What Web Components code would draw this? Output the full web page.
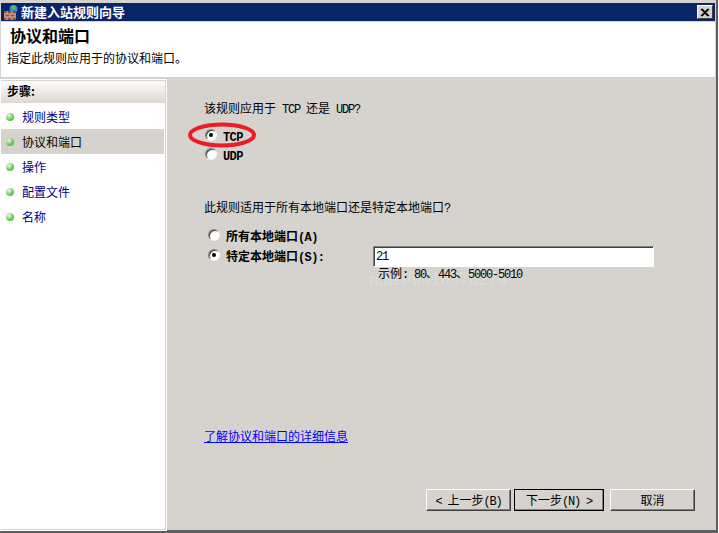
<!DOCTYPE html>
<html lang="zh">
<head>
<meta charset="utf-8">
<title>新建入站规则向导</title>
<style>
  html, body { margin: 0; padding: 0; width: 719px; height: 533px; overflow: hidden; background: #fff; }
  body { font: 12px "Noto Sans CJK SC", "Liberation Sans", sans-serif; color: #000; }
</style>
</head>
<body>

<wizard-window>
  <span slot="title">新建入站规则向导</span>
  <wizard-header></wizard-header>
  <div style="display:flex;flex:1;min-height:0;background:#d6d3ce;gap:2px">
    <step-list>
      <step-item>规则类型</step-item>
      <step-item active>协议和端口</step-item>
      <step-item>操作</step-item>
      <step-item>配置文件</step-item>
      <step-item>名称</step-item>
    </step-list>
    <protocol-page></protocol-page>
  </div>
</wizard-window>

<script>
class WizardWindow extends HTMLElement {
  constructor() {
    super();
    this.attachShadow({ mode: 'open' });
    this.shadowRoot.innerHTML = `
      <style>
        :host {
          display: flex;
          flex-direction: column;
          width: 718px;
          height: 533px;
          box-sizing: border-box;
          background: #d6d3ce;
          border-right: 2px solid #5f5f5f;
          border-bottom: 3px solid #5f5f5f;
          padding: 3px 0 0 1px;
        }
        .bar {
          height: 18px;
          flex: none;
          margin-right: 1px;
          background: #0a246a;
          color: #fff;
          font-weight: 700;
          font-size: 13px;
          display: flex;
          align-items: center;
          padding-left: 3px;
          gap: 3px;
          line-height: 18px;
        }
        .bar svg { flex: none; }
        .title { flex: 1; }
        .close {
          width: 16px;
          height: 14px;
          margin-right: 2px;
          background: #d6d3ce;
          box-sizing: border-box;
          border: 1px solid;
          border-color: #fff #404040 #404040 #fff;
          display: flex;
          align-items: center;
          justify-content: center;
        }
        .body { flex: 1; min-height: 0; display: flex; flex-direction: column; margin-right: 1px; padding-top: 1px; }
      </style>
      <div class="bar">
        <svg width="14" height="15" viewBox="0 0 14 15">
          <circle cx="9.500" cy="4" r="4" fill="#2f8fd0"/>
          <path d="M7 2l3-2 2 3-3 2z" fill="#5fc04f"/>
          <rect x="0" y="6" width="12" height="9" fill="#9a4a36"/>
          <path d="M0 9h12M0 12h12M3 6v3M8 6v3M1 9v3M6 9v3M11 9v3M3 12v3M8 12v3" stroke="#d9b8a8" stroke-width="1" fill="none"/>
        </svg>
        <span class="title"><slot name="title"></slot></span>
        <span class="close">
          <svg width="10" height="9" viewBox="0 0 10 9"><path d="M1 1l7 7M2 1l7 7M8 1l-7 7M9 1l-7 7" stroke="#000" stroke-width="1.200" fill="none"/></svg>
        </span>
      </div>
      <div class="body"><slot></slot></div>
    `;
  }
}

class WizardHeader extends HTMLElement {
  constructor() {
    super();
    this.attachShadow({ mode: 'open' });
    this.shadowRoot.innerHTML = `
      <style>
        :host {
          display: block;
          flex: none;
          height: 56px;
          box-sizing: border-box;
          background: #fff;
          border-bottom: 1px solid #d6d3ce;
          padding: 3px 0 0 9px;
        }
        h1 { margin: 0; font-size: 16px; line-height: 20px; font-weight: 700; }
        p { margin: 4px 0 0 -3px; font-size: 12px; line-height: 17px; }
      </style>
      <h1>协议和端口</h1>
      <p>指定此规则应用于的协议和端口。</p>
    `;
  }
}

class StepList extends HTMLElement {
  constructor() {
    super();
    this.attachShadow({ mode: 'open' });
    this.shadowRoot.innerHTML = `
      <style>
        :host {
          display: block;
          flex: none;
          width: 165px;
          box-sizing: border-box;
          margin-top: 2px;
          background: #fff;
          border: 1px solid #d6d3ce;
          border-left: 0;
          outline: 1px solid #fff;
        }
        .head {
          height: 22px;
          padding-left: 6px;
          font-weight: 700;
          line-height: 20px;
          background: linear-gradient(#fdfcfc, #dcd7d2);
        }
        .items { display: flex; flex-direction: column; padding-top: 1px; }
      </style>
      <div class="head">步骤:</div>
      <div class="items"><slot></slot></div>
    `;
  }
}

class StepItem extends HTMLElement {
  constructor() {
    super();
    this.attachShadow({ mode: 'open' });
    this.shadowRoot.innerHTML = `
      <style>
        :host {
          display: flex;
          align-items: center;
          height: 25px;
          padding-left: 5px;
          gap: 8px;
          color: #000080;
        }
        :host([active]) { background: #d6d3ce; color: #000; margin-right: 1px; }
        i {
          width: 8px;
          height: 8px;
          flex: none;
          border-radius: 50%;
          background: radial-gradient(circle at 35% 30%, #d8e8d8 0 15%, #6fd35f 50%, #3aa82f 100%);
        }
      </style>
      <i></i><span><slot></slot></span>
    `;
  }
}

class RadioOption extends HTMLElement {
  constructor() {
    super();
    this.attachShadow({ mode: 'open' });
    this.shadowRoot.innerHTML = `
      <style>
        :host {
          display: flex;
          align-items: center;
          gap: 6px;
          font-weight: 700;
          height: 20px;
        }
        .dot {
          width: 12px;
          height: 12px;
          flex: none;
          box-sizing: border-box;
          border-radius: 50%;
          background: #fff;
          border: 1px solid;
          border-color: #808080 #f4f4f4 #f4f4f4 #808080;
          box-shadow: inset 1px 1px 0 #404040;
          display: flex;
          align-items: center;
          justify-content: center;
        }
        :host([checked]) .dot::after {
          content: '';
          width: 4px;
          height: 4px;
          border-radius: 50%;
          background: #000;
        }
      </style>
      <span class="dot"></span><span><slot></slot></span>
    `;
  }
}

class WinButton extends HTMLElement {
  constructor() {
    super();
    this.attachShadow({ mode: 'open' });
    this.shadowRoot.innerHTML = `
      <style>
        :host {
          display: flex;
          align-items: center;
          justify-content: center;
          width: 85px;
          height: 22px;
          box-sizing: border-box;
          background: #d6d3ce;
          border: 1px solid;
          border-color: #fff #404040 #404040 #fff;
          box-shadow: inset -1px -1px 0 #808080;
          line-height: 18px;
        }
        :host([primary]) {
          width: 90px;
          outline: 1px solid #000;
          outline-offset: -1px;
          border-color: #000;
        }
      </style>
      <span><slot></slot></span>
    `;
  }
}

class ProtocolPage extends HTMLElement {
  constructor() {
    super();
    this.attachShadow({ mode: 'open' });
    this.shadowRoot.innerHTML = `
      <style>
        :host {
          display: flex;
          flex: 1;
          flex-direction: column;
          position: relative;
          background: #d6d3ce;
          padding: 21px 0 0 36px;
          box-sizing: border-box;
          min-width: 0;
        }
        .m { font-family: "Liberation Mono", monospace; font-size: 12px; letter-spacing: -1.2px; line-height: 0; }
        .b { letter-spacing: -.6px; }
        .q { line-height: 17px; }
        .tcp { display: flex; flex-direction: column; margin: 9px 0 34px 1px; }
        .tcp radio-option + radio-option { margin-top: -1px; }
        .row { display: flex; align-items: flex-start; }
        .row radio-option { width: 165px; flex: none; }
        .ports { display: flex; flex-direction: column; margin: 10px 0 0 4px; }
        input {
          width: 281px;
          height: 21px;
          margin: 1px 0 0;
          box-sizing: border-box;
          border: 1px solid;
          border-color: #808080 #fff #fff #808080;
          box-shadow: inset 1px 1px 0 #404040;
          background: #fff;
          padding: 0 0 0 2px;
          font: 12px "Liberation Mono", monospace;
          letter-spacing: -1.2px;
          outline: 0;
        }
        .hint { margin: -2px 0 0 170px; line-height: 15px; position: relative; }
        .mark {
          position: absolute;
          left: 201px;
          top: 190px;
          font: 19px "Liberation Serif", serif;
          color: #dedbd7;
        }
        a { color: #0000ff; text-decoration: underline; margin-top: 147px; line-height: 17px; align-self: flex-start; }
        .buttons { display: flex; align-self: flex-end; margin: auto 20px 19px 0; }
        .ring { position: absolute; left: 20px; top: 44px; }
      </style>
      <span class="mark">n.net/u010376274</span>
      <div class="q">该规则应用于<span class="m"> TCP </span>还是<span class="m"> UDP?</span></div>
      <div class="tcp">
        <radio-option checked><span class="m b">TCP</span></radio-option>
        <radio-option><span class="m b">UDP</span></radio-option>
      </div>
      <div class="q">此规则适用于所有本地端口还是特定本地端口<span class="m">?</span></div>
      <div class="ports">
        <radio-option>所有本地端口<span class="m b">(A)</span></radio-option>
        <div class="row">
          <radio-option checked>特定本地端口<span class="m b">(S):</span></radio-option>
          <input value="21">
        </div>
        <div class="hint">示例<span class="m">: 80</span>、<span class="m">443</span>、<span class="m">5000-5010</span></div>
      </div>
      <a>了解协议和端口的详细信息</a>
      <div class="buttons">
        <win-button><span class="m">&lt; </span>上一步<span class="m">(B)</span></win-button>
        <win-button primary style="margin-left:3px">下一步<span class="m">(N) &gt;</span></win-button>
        <win-button style="margin-left:6px">取消</win-button>
      </div>
      <svg class="ring" width="68" height="26" viewBox="0 0 68 26">
        <ellipse cx="34" cy="13" rx="32" ry="10.500" fill="none" stroke="#ed1c24" stroke-width="4"/>
      </svg>
    `;
  }
}

customElements.define('wizard-window', WizardWindow);
customElements.define('wizard-header', WizardHeader);
customElements.define('step-list', StepList);
customElements.define('step-item', StepItem);
customElements.define('radio-option', RadioOption);
customElements.define('win-button', WinButton);
customElements.define('protocol-page', ProtocolPage);
</script>
</body>
</html>
